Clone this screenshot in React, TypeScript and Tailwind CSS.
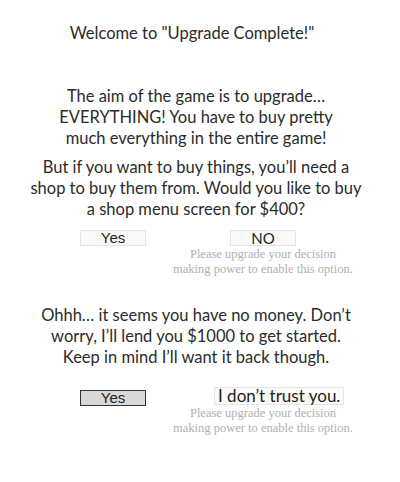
import React from "react";

const note = (
  <div className="mt-[1px] flex flex-col items-center whitespace-nowrap font-['Liberation_Serif',serif] text-[12.5px] leading-[15px] text-[#b0b0b0]">
    <span>Please upgrade your decision</span>
    <span>making power to enable this option.</span>
  </div>
);

export default function App() {
  return (
    <div className="h-[482px] w-[400px] bg-white font-['Lato',sans-serif] text-[#2b2b2b]">
      <div className="flex w-[392px] flex-col items-center whitespace-nowrap pt-[23px] text-center">
        <h1 className="mr-[8px] text-[16.5px] leading-[20px]">Welcome to "Upgrade Complete!"</h1>

        <p className="mt-[43px] text-[16.5px] leading-[21px]">
          The aim of the game is to upgrade…
          <br />
          EVERYTHING! You have to buy pretty
          <br />
          much everything in the entire game!
        </p>
        <p className="mt-[8px] text-[16.5px] leading-[21px]">
          But if you want to buy things, you’ll need a
          <br />
          shop to buy them from. Would you like to buy
          <br />a shop menu screen for $400?
        </p>
      </div>

      <div className="ml-[38px] mt-[10px] grid w-[300px] grid-cols-2">
        <div className="flex justify-center">
          <button className="h-[16px] w-[66px] border border-[#e4e4e4] bg-[#fbfaf9] font-['Liberation_Sans',sans-serif] text-[15px] leading-[14px] text-[#222]">
            Yes
          </button>
        </div>
        <div className="flex flex-col items-center">
          <button className="h-[16px] w-[66px] border border-[#e4e4e4] bg-[#fbfaf9] text-[15px] leading-[14px] text-[#222]">
            NO
          </button>
          {note}
        </div>
      </div>

      <p className="mt-[28px] w-[392px] whitespace-nowrap text-center text-[16.5px] leading-[21px]">
        Ohhh… it seems you have no money. Don’t
        <br />
        worry, I’ll lend you $1000 to get started.
        <br />
        Keep in mind I’ll want it back though.
      </p>

      <div className="ml-[38px] mt-[19px] grid w-[300px] grid-cols-2">
        <div className="flex justify-center pt-[3px]">
          <button className="h-[16px] w-[66px] border border-[#333] bg-[#d8d8d8] font-['Liberation_Sans',sans-serif] text-[15px] leading-[14px] text-[#222]">
            Yes
          </button>
        </div>
        <div className="flex flex-col items-center">
          <button className="ml-[26px] h-[18px] self-start whitespace-nowrap border border-[#e6e6e6] bg-[#fbfaf9] px-[3px] text-[17px] leading-[16px] text-[#222]">
            I don’t trust you.
          </button>
          {note}
        </div>
      </div>
    </div>
  );
}
